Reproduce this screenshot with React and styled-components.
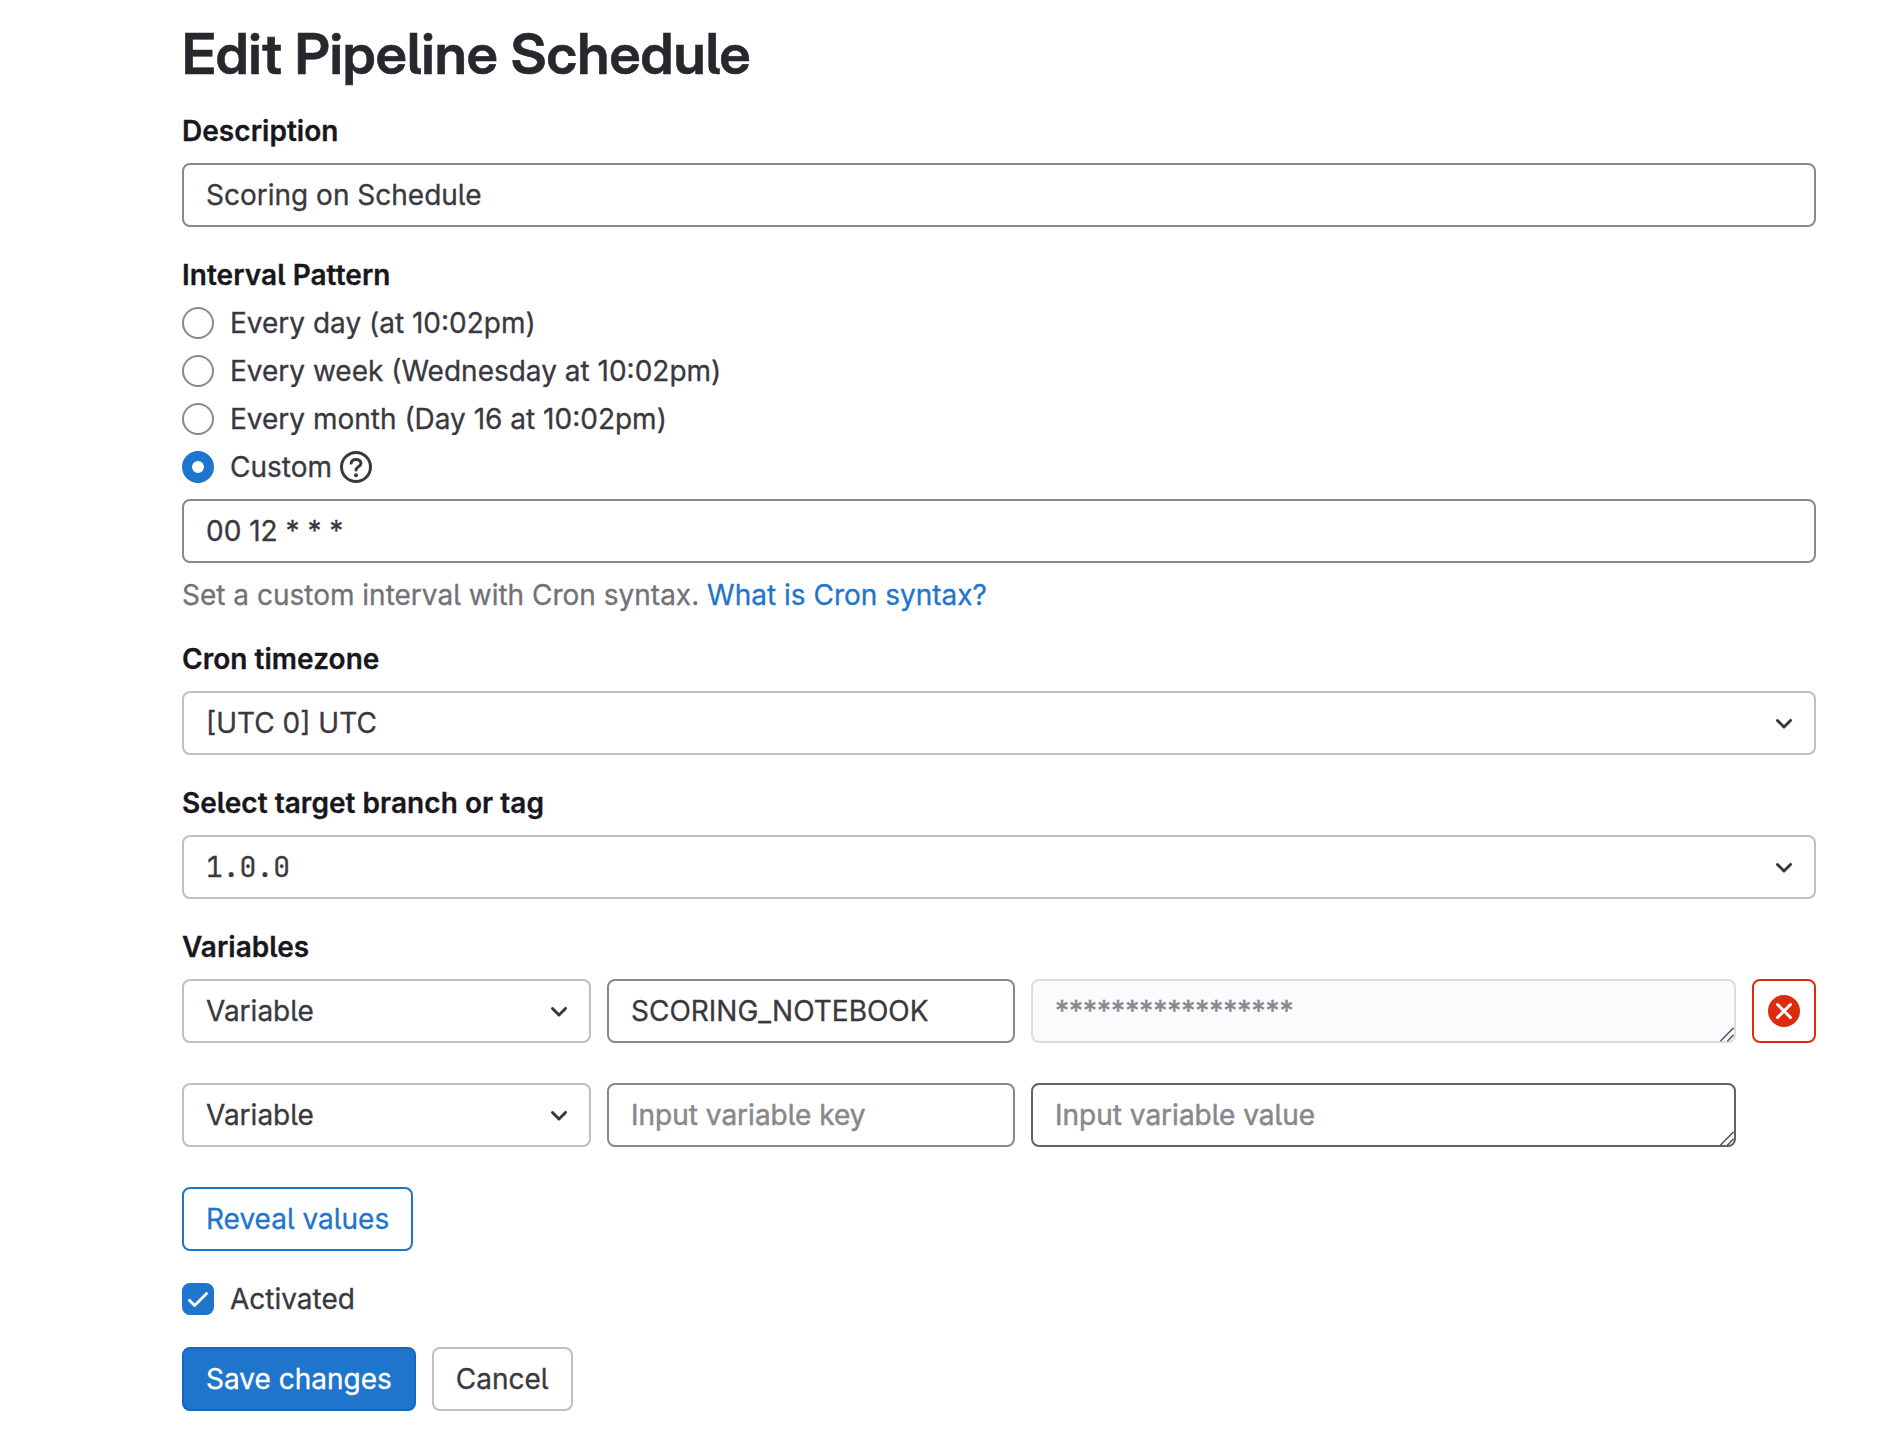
import React from "react";
import styled, { createGlobalStyle, css } from "styled-components";

const GlobalStyle = createGlobalStyle`
  *, *::before, *::after { box-sizing: border-box; }
  body {
    margin: 0;
    background: #fff;
    color: #3a383f;
    font-family: Inter, "Noto Sans", sans-serif;
    font-size: 28px;
    line-height: 32px;
    font-feature-settings: "cv05" 1;
    -webkit-text-stroke: 0.3px currentColor;
  }
`;

const Page = styled.main`
  min-height: 1430px;
  padding: 19px 66px 19px 182px;
`;

const Title = styled.h1`
  margin: 0 0 26px;
  color: #28272d;
  font-family: "Inter Display", Inter, sans-serif;
  font-size: 56px;
  font-weight: 600;
  line-height: 70px;
  letter-spacing: 0.11px;
  -webkit-text-stroke: 0.6px currentColor;
`;

const Form = styled.form`
  display: flex;
  flex-direction: column;
  gap: 32px;
`;

const Group = styled.div`
  display: flex;
  flex-direction: column;
  gap: 16px;
`;

const Label = styled.div`
  color: #18171d;
  font-weight: 600;
  letter-spacing: 0.04px;
`;

const control = css`
  width: 100%;
  height: 64px;
  border: 2px solid #89888d;
  border-radius: 8px;
  background: #fff;
  color: #3a383f;
  font: inherit;
  font-feature-settings: inherit;
  letter-spacing: inherit;
`;

const placeholder = css`
  &::placeholder {
    color: #89888d;
    opacity: 1;
    -webkit-text-stroke: 0.5px #89888d;
  }
`;

const Input = styled.input`
  ${control}
  ${placeholder}
  display: block;
  padding: 0 22px;
  outline: none;
`;

const Select = styled.div`
  ${control}
  display: flex;
  align-items: center;
  justify-content: space-between;
  padding: 0 14px 0 22px;
  border-color: #bfbfc3;
`;

const Mono = styled.span`
  font-family: "JetBrains Mono", "DejaVu Sans Mono", monospace;
`;

const ValueBox = styled.div`
  position: relative;
  height: 64px;
`;

const Textarea = styled.textarea`
  ${control}
  ${placeholder}
  display: block;
  padding: 14px 22px;
  overflow: hidden;
  resize: none;
  outline: none;
  border-color: ${(p) => (p.disabled ? "#dcdcde" : "#626168")};
  background: ${(p) => (p.disabled ? "#fbfafd" : "#fff")};
  color: #89888d;
  -webkit-text-stroke: 0.5px #89888d;
`;

const Grip = styled.svg`
  position: absolute;
  right: 2px;
  bottom: 1px;
  width: 14px;
  height: 15px;
  pointer-events: none;
`;

const Choice = styled.div`
  display: flex;
  align-items: center;
  height: 32px;
`;

const ChoiceText = styled.span`
  margin: 0 8px 0 16px;
`;

const Radio = styled.span`
  width: 32px;
  height: 32px;
  border: ${(p) => (p.$checked ? "10px solid #1f75cb" : "2px solid #89888d")};
  border-radius: 50%;
  background: #fff;
`;

const Check = styled.span`
  display: flex;
  width: 32px;
  height: 32px;
  border-radius: 8px;
  background: #1f75cb;
`;

const Icon = styled.svg`
  display: block;
  flex: none;
  width: 32px;
  height: 32px;
`;

const Help = styled.div`
  color: #737278;
`;

const Link = styled.a`
  color: #1f75cb;
  text-decoration: none;
`;

const Rows = styled.div`
  display: flex;
  flex-direction: column;
  gap: 40px;
`;

const VariableRow = styled.div`
  display: grid;
  grid-template-columns: 409px 408px 1fr 64px;
  gap: 16px;
`;

const tones = {
  default: css`border-color: #bfbfc3; background: #fff; color: #3a383f;`,
  outline: css`border-color: #1f75cb; background: #fff; color: #1f75cb;`,
  confirm: css`border-color: #1068bf; background: #1f75cb; color: #fff;`,
  danger: css`border-color: #dd2b0e; background: #fff; color: #dd2b0e;`,
};

const Button = styled.button`
  display: inline-flex;
  align-items: center;
  justify-content: center;
  height: 64px;
  padding: 0 ${(p) => (p.$icon ? 14 : 22)}px;
  border: 2px solid;
  border-radius: 8px;
  font: inherit;
  font-feature-settings: inherit;
  ${(p) => tones[p.$tone || "default"]}
`;

const RevealLine = styled.div`
  display: flex;
`;

const Actions = styled.div`
  display: flex;
  gap: 16px;
`;

const Chevron = () => (
  <Icon viewBox="0 0 16 16">
    <path
      fill="#3a383f"
      fillRule="evenodd"
      d="M4.22 6.22a.75.75 0 0 1 1.06 0L8 8.94l2.72-2.72a.75.75 0 1 1 1.06 1.06l-3.25 3.25a.75.75 0 0 1-1.06 0L4.22 7.28a.75.75 0 0 1 0-1.06z"
    />
  </Icon>
);

const HelpIcon = () => (
  <Icon viewBox="0 0 32 32" fill="none" stroke="#3a383f" strokeWidth="3">
    <circle cx="16" cy="16" r="14.5" />
    <path
      strokeLinecap="round"
      d="M11.2 12.1c.3-2.2 2.2-3.7 4.8-3.7 2.9 0 4.9 1.6 4.9 4 0 3.1-4.9 3.4-4.9 6.6"
    />
    <circle cx="16" cy="24.2" r="2" fill="#3a383f" stroke="none" />
  </Icon>
);

const ClearIcon = () => (
  <Icon viewBox="0 0 16 16">
    <circle cx="8" cy="8" r="8" fill="#dd2b0e" />
    <path d="M4.75 4.75l6.5 6.5M11.25 4.75l-6.5 6.5" stroke="#fff" strokeWidth="1.5" strokeLinecap="round" />
  </Icon>
);

const CheckIcon = () => (
  <Icon viewBox="0 0 32 32" fill="none">
    <path d="M7.4 17.2l5.2 5.2L24.6 10.4" stroke="#fff" strokeWidth="2.8" strokeLinecap="round" strokeLinejoin="round" />
  </Icon>
);

const ResizeGrip = () => (
  <Grip viewBox="0 0 14 15" fill="none" stroke="#55545a" strokeWidth="1.5">
    <path d="M.3 14.2L13.6.9M7.3 14.2l6.3-6.3" />
  </Grip>
);

const intervals = [
  "Every day (at 10:02pm)",
  "Every week (Wednesday at 10:02pm)",
  "Every month (Day 16 at 10:02pm)",
];

export default function App() {
  return (
    <Page>
      <GlobalStyle />
      <Title>Edit Pipeline Schedule</Title>
      <Form>
        <Group>
          <Label>Description</Label>
          <Input defaultValue="Scoring on Schedule" />
        </Group>
        <Group>
          <Label>Interval Pattern</Label>
          {intervals.map((text) => (
            <Choice key={text}>
              <Radio />
              <ChoiceText>{text}</ChoiceText>
            </Choice>
          ))}
          <Choice>
            <Radio $checked />
            <ChoiceText>Custom</ChoiceText>
            <HelpIcon />
          </Choice>
          <Input defaultValue="00 12 * * *" />
          <Help>
            Set a custom interval with Cron syntax. <Link>What is Cron syntax?</Link>
          </Help>
        </Group>
        <Group>
          <Label>Cron timezone</Label>
          <Select>
            <span>[UTC 0] UTC</span>
            <Chevron />
          </Select>
        </Group>
        <Group>
          <Label>Select target branch or tag</Label>
          <Select>
            <Mono>1.0.0</Mono>
            <Chevron />
          </Select>
        </Group>
        <Group>
          <Label>Variables</Label>
          <Rows>
            <VariableRow>
              <Select>
                <span>Variable</span>
                <Chevron />
              </Select>
              <Input defaultValue="SCORING_NOTEBOOK" />
              <ValueBox>
                <Textarea disabled rows={1} defaultValue="*****************" />
                <ResizeGrip />
              </ValueBox>
              <Button type="button" $tone="danger" $icon>
                <ClearIcon />
              </Button>
            </VariableRow>
            <VariableRow>
              <Select>
                <span>Variable</span>
                <Chevron />
              </Select>
              <Input placeholder="Input variable key" />
              <ValueBox>
                <Textarea rows={1} placeholder="Input variable value" />
                <ResizeGrip />
              </ValueBox>
            </VariableRow>
            <RevealLine>
              <Button type="button" $tone="outline">Reveal values</Button>
            </RevealLine>
          </Rows>
        </Group>
        <Choice>
          <Check>
            <CheckIcon />
          </Check>
          <ChoiceText>Activated</ChoiceText>
        </Choice>
        <Actions>
          <Button type="button" $tone="confirm">Save changes</Button>
          <Button type="button">Cancel</Button>
        </Actions>
      </Form>
    </Page>
  );
}
